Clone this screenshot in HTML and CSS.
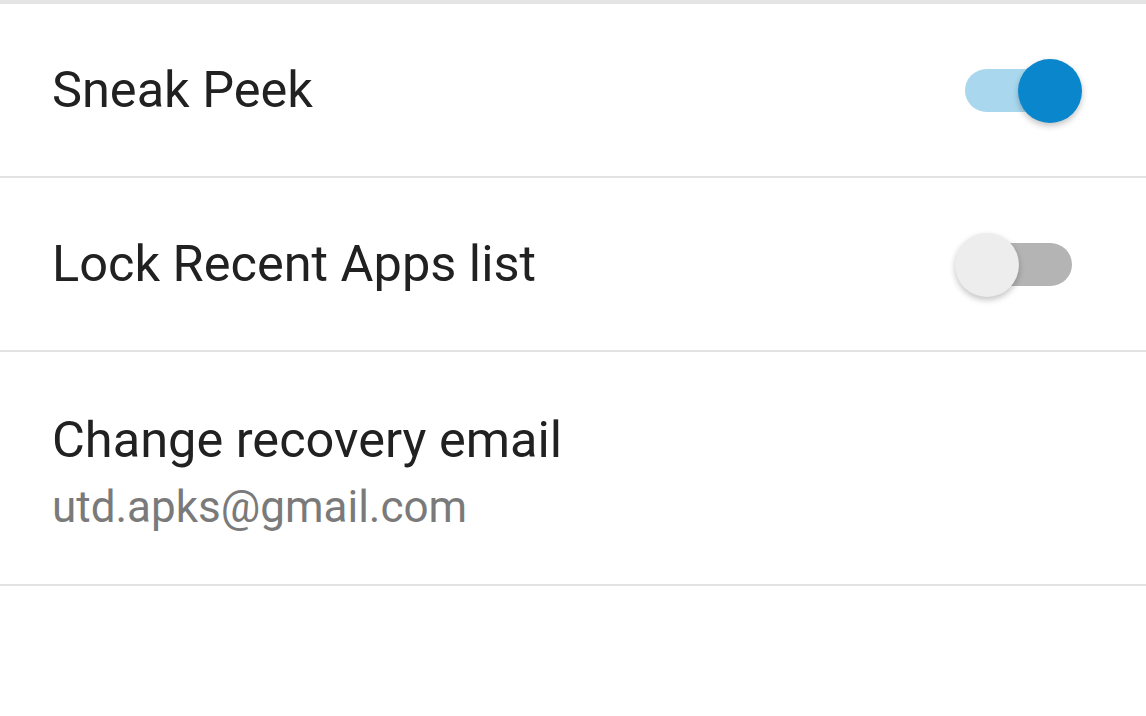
FILE: index.html
```html
<!DOCTYPE html>
<html>
<head>
<meta charset="utf-8">
<link rel="stylesheet" href="styles.css">
</head>
<body>
<div class="topband"></div>
<div class="list">
  <div class="row row-switch">
    <div class="label">Sneak Peek</div>
    <div class="switch on"><div class="track"></div><div class="thumb"></div></div>
  </div>
  <div class="row row-switch">
    <div class="label">Lock Recent Apps list</div>
    <div class="switch off"><div class="track"></div><div class="thumb"></div></div>
  </div>
  <div class="row row-double">
    <div class="label">Change recovery email</div>
    <div class="sub">utd.apks@gmail.com</div>
  </div>
</div>
</body>
</html>
```
FILE: styles.css
```css
html, body {
  margin: 0;
  padding: 0;
  background: #ffffff;
  width: 1146px;
  height: 716px;
  overflow: hidden;
  font-family: Roboto, "Noto Sans", sans-serif;
}
.topband {
  height: 4px;
  background: #e4e4e4;
}
.list {
  display: flex;
  flex-direction: column;
}
.row {
  border-bottom: 2px solid #e2e2e2;
  padding-left: 52px;
  box-sizing: border-box;
}
.row-switch {
  height: 174px;
  display: flex;
  align-items: center;
  justify-content: space-between;
  padding-right: 74px;
}
.row-double {
  height: 234px;
  display: flex;
  flex-direction: column;
  padding-top: 58px;
}
.label {
  font-size: 50.5px;
  color: #212121;
  line-height: 60px;
}
.sub {
  font-size: 44px;
  color: #7a7a7a;
  line-height: 52px;
  margin-top: 11px;
}
.switch {
  position: relative;
  width: 107px;
  height: 43px;
}
.track {
  width: 107px;
  height: 43px;
  border-radius: 22px;
}
.thumb {
  position: absolute;
  top: -10px;
  width: 64px;
  height: 64px;
  border-radius: 50%;
  box-shadow: 0 3px 6px rgba(0,0,0,0.24);
}
.on .track { background: #a9d8ee; }
.on .thumb { background: #0a87cc; left: 53px; }
.off .track { background: #b4b4b4; }
.off .thumb { background: #ededed; left: -10px; }
```
